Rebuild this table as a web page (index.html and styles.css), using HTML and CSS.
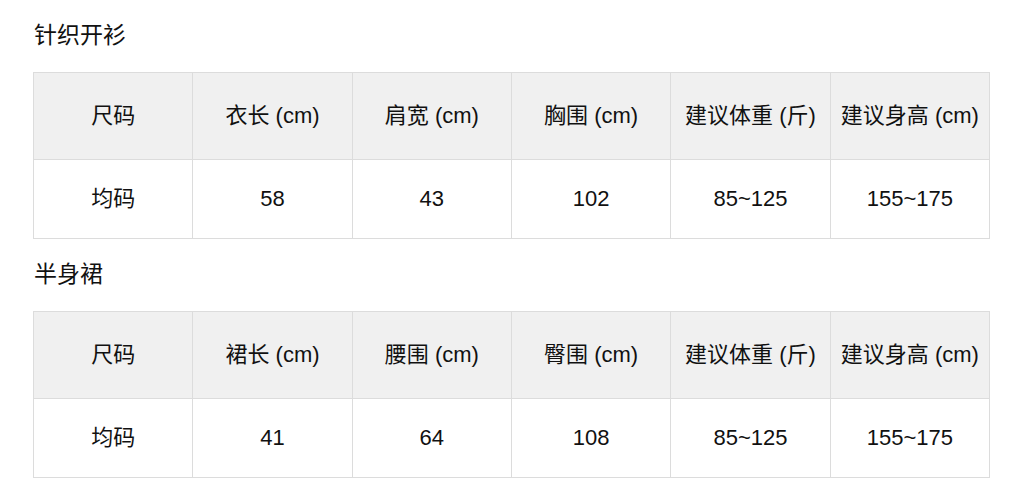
FILE: index.html
```html
<!DOCTYPE html>
<html lang="zh-CN">
<head>
<meta charset="utf-8">
<title>尺码表</title>
<link rel="stylesheet" href="styles.css">
</head>
<body>
<div class="page">
  <h2 class="title">针织开衫</h2>
  <table class="size-table">
    <thead>
      <tr><th>尺码</th><th>衣长 (cm)</th><th>肩宽 (cm)</th><th>胸围 (cm)</th><th>建议体重 (斤)</th><th>建议身高 (cm)</th></tr>
    </thead>
    <tbody>
      <tr><td>均码</td><td>58</td><td>43</td><td>102</td><td>85~125</td><td>155~175</td></tr>
    </tbody>
  </table>
  <h2 class="title">半身裙</h2>
  <table class="size-table">
    <thead>
      <tr><th>尺码</th><th>裙长 (cm)</th><th>腰围 (cm)</th><th>臀围 (cm)</th><th>建议体重 (斤)</th><th>建议身高 (cm)</th></tr>
    </thead>
    <tbody>
      <tr><td>均码</td><td>41</td><td>64</td><td>108</td><td>85~125</td><td>155~175</td></tr>
    </tbody>
  </table>
</div>
</body>
</html>
```

FILE: styles.css
```css
html, body {
  margin: 0;
  padding: 0;
  background: #ffffff;
}
body {
  font-family: "Liberation Sans", "Noto Sans CJK SC", sans-serif;
  color: #111111;
}
.page {
  padding: 20px 34px 0 33px;
}
.title {
  margin: 0 0 22px 1px;
  font-size: 23px;
  line-height: 30px;
  font-weight: 400;
}
.size-table {
  width: 957px;
  border-collapse: collapse;
  table-layout: fixed;
  margin-bottom: 20px;
  font-size: 22px;
  line-height: 30px;
}
.size-table th,
.size-table td {
  border: 1px solid #dcdcdc;
  text-align: center;
  vertical-align: middle;
  padding: 0;
  font-weight: 400;
}
.size-table th {
  background: #f0f0f0;
  height: 86px;
}
.size-table td {
  height: 78px;
}
```
